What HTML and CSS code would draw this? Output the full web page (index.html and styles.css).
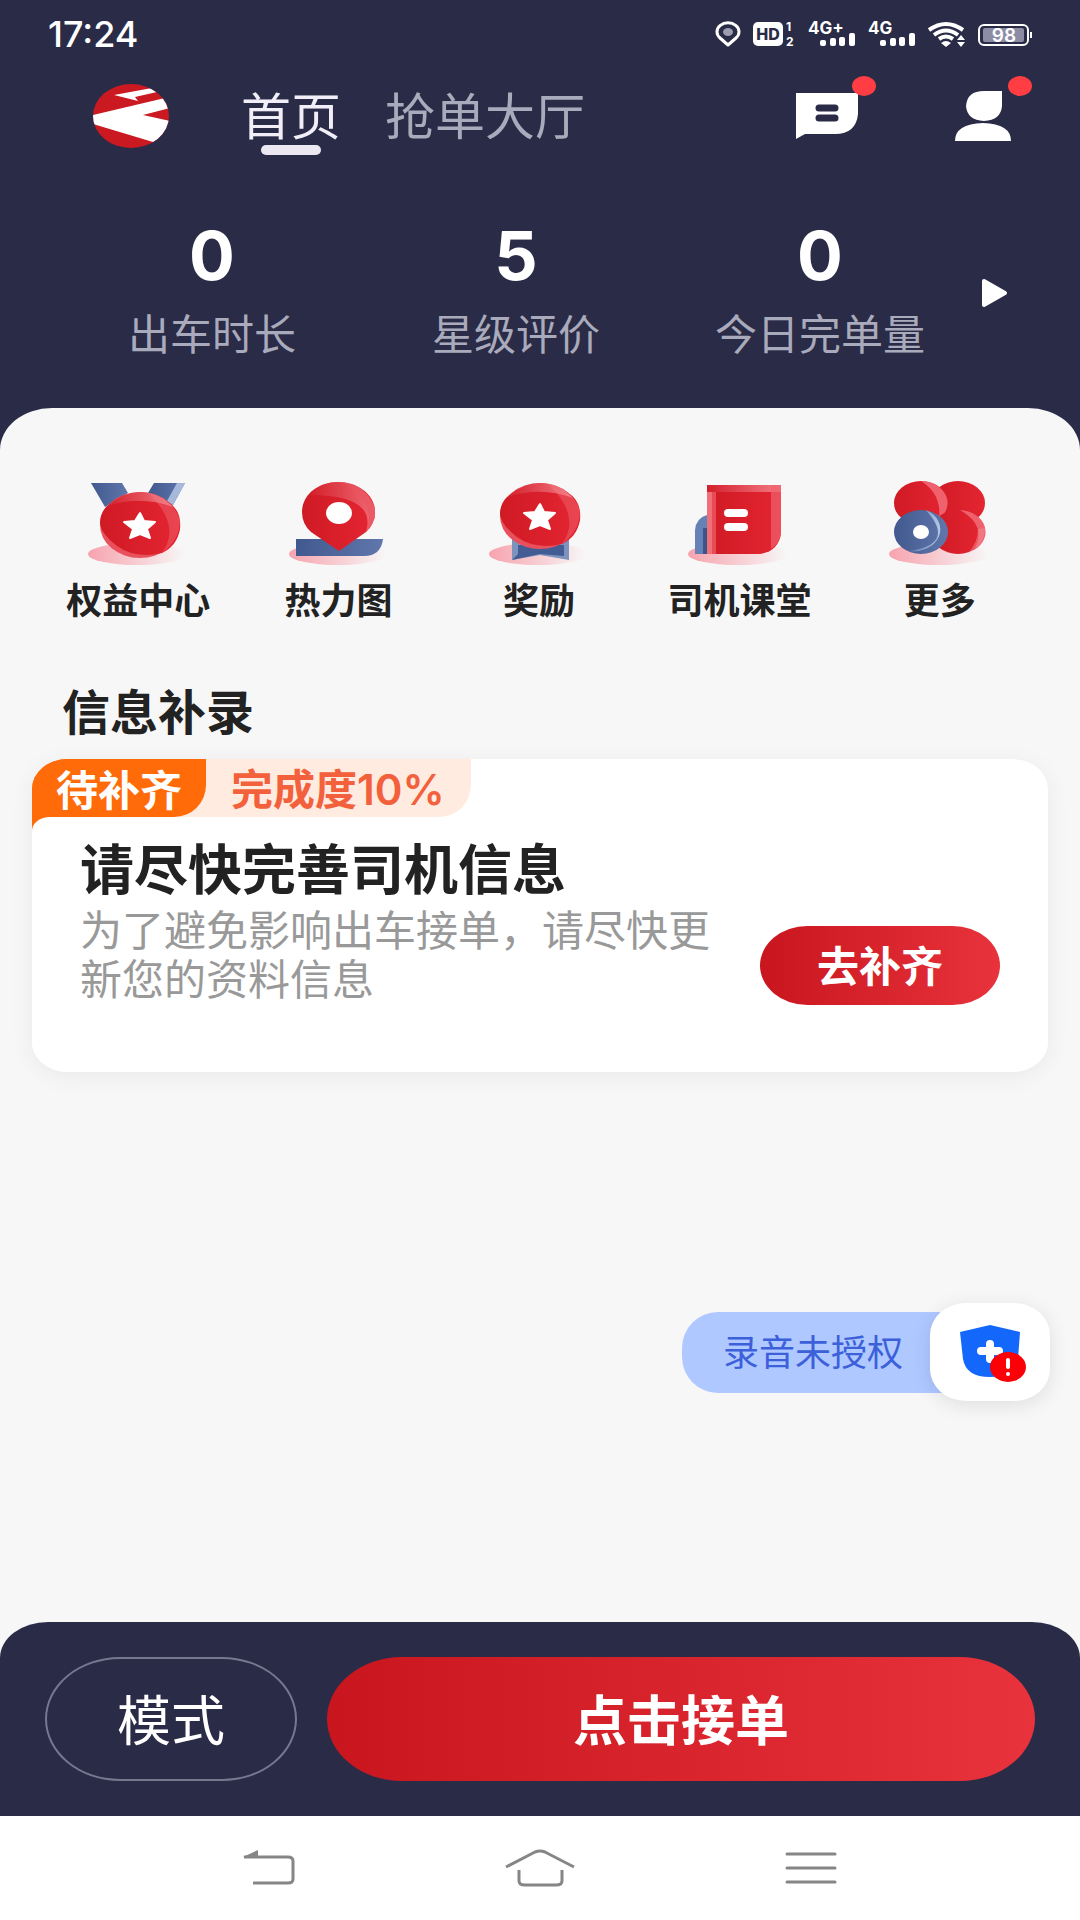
FILE: index.html
```html
<!DOCTYPE html>
<html lang="zh-CN">
  <head>
    <meta charset="UTF-8" />
    <meta name="viewport" content="width=device-width, initial-scale=1.0" />
    <title>首页</title>
    <link rel="stylesheet" href="styles.css">
  </head>
  <body>
    <!-- shared gradients -->
    <svg class="defs" width="0" height="0" aria-hidden="true">
      <defs>
        <linearGradient id="shadow"><stop offset="0" stop-color="#f7a3ae" /><stop offset="1" stop-color="#f7a3ae" stop-opacity="0" /></linearGradient>
        <linearGradient id="red"><stop offset="0" stop-color="#cf1a24" /><stop offset="1" stop-color="#e42532" /></linearGradient>
        <linearGradient id="pink" x1="0" y1="0" x2="1" y2="0"><stop offset="0" stop-color="#d3202b" /><stop offset="1" stop-color="#f37a84" /></linearGradient>
        <linearGradient id="blue"><stop offset="0" stop-color="#42598f" /><stop offset="1" stop-color="#5f77ab" /></linearGradient>
        <linearGradient id="sky"><stop offset="0" stop-color="#5a72a8" /><stop offset="1" stop-color="#b4c8ea" /></linearGradient>
      </defs>
    </svg>

    <header class="header">
      <div class="status">
        <span class="time">17:24</span>
        <div class="status-icons">
          <svg width="26" height="26" viewBox="0 0 26 26"><path d="M13 24 5 17A11 9 0 1 1 21 17Z" fill="none" stroke="#fff" stroke-width="3" stroke-linejoin="round" /><ellipse cx="13" cy="11" rx="5" ry="4" fill="#9c9db0" /></svg>
          <svg width="43" height="26" viewBox="0 0 43 26"><rect y="1" width="30" height="24" rx="5" fill="#fff" /><text class="hd" x="15" y="19" text-anchor="middle">HD</text><text class="sim" x="33" y="10">1</text><text class="sim" x="33" y="25">2</text></svg>
          <svg width="48" height="26" viewBox="0 0 48 26"><text class="net" x="0" y="13">4G+</text><g fill="#fff"><rect x="12" y="19" width="6" height="6" rx="2" /><rect x="22" y="17" width="6" height="8" rx="2" /><rect x="31" y="16" width="6" height="9" rx="2" /><rect x="41" y="12" width="6" height="13" rx="2" /></g></svg>
          <svg width="48" height="26" viewBox="0 0 48 26"><text class="net" x="0" y="13">4G</text><g fill="#fff"><rect x="12" y="19" width="6" height="6" rx="2" /><rect x="22" y="17" width="6" height="8" rx="2" /><rect x="31" y="16" width="6" height="9" rx="2" /><rect x="41" y="12" width="6" height="13" rx="2" /></g></svg>
          <svg width="38" height="26" viewBox="0 0 38 26"><g fill="none" stroke="#fff" stroke-width="4"><path d="M1 9Q18-3 35 9" /><path d="M6 14Q18 5 30 14" /><path d="M11 18Q18 13 25 18" /></g><path d="M13 22Q18 18 23 22L18 26ZM29 19l4-5 4 5ZM29 21h8l-4 5Z" fill="#fff" /></svg>
          <svg width="54" height="26" viewBox="0 0 54 26"><rect x="1" y="4" width="49" height="20" rx="5" fill="none" stroke="#fff" stroke-width="2" /><rect x="5" y="7" width="41" height="14" rx="2" fill="#8c8da5" /><path d="M53 11v6" stroke="#fff" stroke-width="2" /><text class="power" x="26" y="21" text-anchor="middle">98</text></svg>
        </div>
      </div>

      <nav class="topbar">
        <svg class="logo" width="77" height="64" viewBox="0 0 77 64">
          <clipPath id="disc"><ellipse cx="38" cy="32" rx="38" ry="32" /></clipPath>
          <g clip-path="url(#disc)">
            <path d="M0 0h77v64H0Z" fill="#cb1922" />
            <path d="M0 31 72 14 77 24 50 31 77 37V50L60 58 0 40ZM21 11 59 4 64 8 42 13 45 17Z" fill="#fff" />
          </g>
        </svg>
        <a class="tab active" href="#">首页</a>
        <a class="tab" href="#">抢单大厅</a>
        <div class="actions">
          <button class="icon-btn" aria-label="消息">
            <svg width="62" height="46" viewBox="0 0 62 46"><path d="M0 0H62V21Q60 41 39 41H9L0 46Z" fill="#fff" /><path d="M23 15H39M23 25H39" stroke="#2a2b47" stroke-width="7" stroke-linecap="round" /></svg>
            <i class="dot"></i>
          </button>
          <button class="icon-btn user" aria-label="我的">
            <svg width="56" height="50" viewBox="0 0 56 50"><path d="M47 0V15Q46 29 29 30 12 29 11 15 12 0 29 0ZM0 50Q0 33 28 32 56 33 56 50Z" fill="#fff" /></svg>
            <i class="dot"></i>
          </button>
        </div>
      </nav>

      <div class="stats">
        <div class="stat"><strong>0</strong><span>出车时长</span></div>
        <div class="stat"><strong>5</strong><span>星级评价</span></div>
        <div class="stat"><strong>0</strong><span>今日完单量</span></div>
        <button class="next" aria-label="下一页">
          <svg width="25" height="28" viewBox="0 0 25 28"><path d="M2 2 23 14 2 26Z" fill="#fff" stroke="#fff" stroke-width="4" stroke-linejoin="round" /></svg>
        </button>
      </div>
    </header>

    <main class="sheet">
      <nav class="services">
        <a class="service" href="#">
          <svg width="110" height="86" viewBox="0 0 110 86">
            <ellipse cx="54" cy="74" rx="49" ry="11" fill="url(#shadow)" />
            <path d="M8 3H39L45 13 22 27Z" fill="url(#blue)" />
            <path d="M71 3H102L90 25 65 13Z" fill="url(#blue)" />
            <path d="M94 3H102L90 25 84 21Z" fill="#a6b9da" />
            <ellipse cx="57" cy="45" rx="40" ry="33" fill="#e8505c" />
            <path d="M24 26Q55 12 84 21 99 30 97 49 94 66 79 73 52 79 34 66 18 54 17 43 17 33 24 26Z" fill="url(#red)" />
            <path d="M24 26Q40 12 57 12 76 12 90 27 58 15 24 26Z" fill="url(#pink)" />
            <path d="M65 13Q88 17 97 39 97 60 79 73 99 45 65 13Z" fill="#f3808a" opacity=".35" />
            <path d="M57 33 61 41 72 42 64 49 67 58 57 54 47 58 50 49 41 42 52 41Z" fill="#fff" stroke="#fff" stroke-width="2" stroke-linejoin="round" />
          </svg>
          <span>权益中心</span>
        </a>
        <a class="service" href="#">
          <svg width="110" height="86" viewBox="0 0 110 86">
            <ellipse cx="54" cy="74" rx="49" ry="11" fill="url(#shadow)" />
            <path d="M12 59H99Q97 76 80 76H12Z" fill="url(#blue)" />
            <path d="M55 71 27 52Q18 44 18 32C18 14 35 2 54 2S91 14 91 32Q91 44 82 52Z" fill="url(#red)" />
            <path d="M25 15Q37 2 54 2 82 3 91 29 91 43 82 52 93 15 25 15Z" fill="url(#pink)" opacity=".8" />
            <path d="M58 2Q83 5 91 28V38L82 52Q94 22 58 2Z" fill="#e8545f" opacity=".6" />
            <ellipse cx="55" cy="33" rx="13" ry="11" fill="#fff" />
          </svg>
          <span>热力图</span>
        </a>
        <a class="service" href="#">
          <svg width="110" height="86" viewBox="0 0 110 86">
            <ellipse cx="54" cy="74" rx="49" ry="11" fill="url(#shadow)" />
            <path d="M28 58H85V80L56 75 28 80Z" fill="#7d92bd" />
            <path d="M34 65H80V76L56 74 28 80 34 74Z" fill="#435c94" />
            <ellipse cx="56" cy="36" rx="40" ry="33" fill="#e8505c" />
            <path d="M23 17Q54 3 83 12 98 21 96 40 93 57 78 64 51 70 33 57 17 45 16 34 16 24 23 17Z" fill="url(#red)" />
            <path d="M23 17Q39 3 56 3 75 3 89 18 57 6 23 17Z" fill="url(#pink)" />
            <path d="M64 4Q87 8 96 30 96 51 78 64 98 36 64 4Z" fill="#f3808a" opacity=".35" />
            <path d="M56 24 60 32 71 33 63 40 66 49 56 45 46 49 49 40 40 33 51 32Z" fill="#fff" stroke="#fff" stroke-width="2" stroke-linejoin="round" />
          </svg>
          <span>奖励</span>
        </a>
        <a class="service" href="#">
          <svg width="110" height="86" viewBox="0 0 110 86">
            <ellipse cx="54" cy="74" rx="50" ry="11" fill="url(#shadow)" />
            <path d="M23 35V74H11V50Q12 38 23 35Z" fill="#6681b5" />
            <path d="M19 48h4v26h-4Z" fill="#3c5589" />
            <path d="M23 5H97V54Q94 72 75 74H23Z" fill="url(#red)" />
            <path d="M23 5H97V12H23Z" fill="url(#pink)" />
            <path d="M87 5H97V54Q95 64 87 69Z" fill="#ef626d" opacity=".7" />
            <path d="M23 12H32V74H23Z" fill="#f06f79" />
            <path d="M28 12H32V74H28Z" fill="#e84a56" />
            <path d="M44 33H60M44 47H60" stroke="#fff" stroke-width="8" stroke-linecap="round" />
          </svg>
          <span>司机课堂</span>
        </a>
        <a class="service" href="#">
          <svg width="110" height="86" viewBox="0 0 110 86">
            <ellipse cx="54" cy="74" rx="50" ry="11" fill="url(#shadow)" />
            <ellipse cx="73" cy="23" rx="27" ry="22" fill="url(#red)" />
            <ellipse cx="36" cy="23" rx="27" ry="22" fill="url(#red)" />
            <path d="M36 1A27 22 0 0 1 54 39Q57 14 36 1Z" fill="#ef626d" />
            <ellipse cx="73" cy="52" rx="27" ry="22" fill="url(#red)" />
            <path d="M75 30A27 22 0 0 1 89 70Q103 46 75 30Z" fill="#ef626d" />
            <path d="M100 48Q100 66 84 72 93 62 93 49Z" fill="#f48b94" opacity=".5" />
            <ellipse cx="36" cy="52" rx="27" ry="22" fill="url(#blue)" />
            <path d="M41 30A27 22 0 0 1 23 71Q72 65 41 30Z" fill="url(#sky)" />
            <ellipse cx="36" cy="52" rx="8" ry="7" fill="#fff" />
          </svg>
          <span>更多</span>
        </a>
      </nav>

      <h2 class="section-title">信息补录</h2>
      <section class="card">
        <div class="tags">
          <span class="tag">待补齐</span>
          <span class="progress">完成度10%</span>
        </div>
        <div class="card-body">
          <h3>请尽快完善司机信息</h3>
          <div class="card-row">
            <p>为了避免影响出车接单，请尽快更新您的资料信息</p>
            <button class="fill-btn">去补齐</button>
          </div>
        </div>
      </section>

      <button class="record">
        <span class="record-text">录音未授权</span>
        <span class="record-icon">
          <svg width="66" height="58" viewBox="0 0 66 58">
            <path d="M0 7 30 0 60 7 58 34Q55 52 30 52 6 52 3 34Z" fill="#1467fb" />
            <path d="M30 19V34M21 26H39" stroke="#fff" stroke-width="8" stroke-linecap="round" />
            <ellipse cx="48" cy="42" rx="18" ry="15" fill="#fb0007" />
            <path d="M48 35V42" stroke="#fff" stroke-width="4" stroke-linecap="round" />
            <circle cx="48" cy="49" r="2" fill="#fff" />
          </svg>
        </span>
      </button>
    </main>

    <footer class="bottom">
      <button class="mode-btn">模式</button>
      <button class="start-btn">点击接单</button>
    </footer>

    <nav class="system">
      <button class="sys-btn" aria-label="返回"><svg width="70" height="40" viewBox="0 0 70 40"><path d="M19 35H54Q59 35 59 31V13Q59 9 54 9H10" fill="none" stroke="#868686" stroke-width="3" /><path d="M9 9 24 2V9Z" fill="#868686" /></svg></button>
      <button class="sys-btn" aria-label="主页"><svg width="70" height="40" viewBox="0 0 70 40"><path d="M1 19 30 4Q35 2 40 4L69 19M14 22V33Q14 37 20 37H51Q57 37 57 33V22" fill="none" stroke="#868686" stroke-width="3" /></svg></button>
      <button class="sys-btn" aria-label="菜单"><svg width="70" height="40" viewBox="0 0 70 40"><path d="M11 6H59M11 20H59M11 34H59" stroke="#868686" stroke-width="3" stroke-linecap="round" /></svg></button>
    </nav>
  </body>
</html>
```
FILE: styles.css
```css
* {
    margin: 0;
    padding: 0;
    box-sizing: border-box;
}
body {
    position: relative;
    min-height: 100vh;
    display: flex;
    flex-direction: column;
    background: #f7f7f7;
    color: #222;
    font-family: "Noto Sans CJK SC", sans-serif;
}
a {
    color: inherit;
    text-decoration: none;
}
button {
    border: none;
    background: none;
    font-family: inherit;
    cursor: pointer;
}
svg {
    display: block;
    overflow: visible;
}
.defs {
    position: absolute;
}

/* header */
.header {
    background: #2a2b47;
    color: #fff;
    padding-bottom: 101px;
    margin-bottom: -52px;
}
.status {
    height: 68px;
    padding: 0 48px;
    display: flex;
    align-items: center;
    justify-content: space-between;
}
.time {
    font: 500 36px/40px Inter, sans-serif;
}
.status-icons {
    display: flex;
    gap: 12px;
}
.status text {
    font-family: Inter, sans-serif;
    font-weight: 700;
    fill: #fff;
}
.status .hd {
    font-size: 16px;
    font-weight: 800;
    fill: #2a2b47;
}
.status .sim {
    font-size: 12px;
}
.status .net {
    font-size: 17px;
}
.status .power {
    font-size: 19px;
    font-weight: 600;
}
.topbar {
    height: 96px;
    padding: 0 69px 0 93px;
    display: flex;
    align-items: center;
}
.logo {
    margin-right: 71px;
}
.tab {
    position: relative;
    margin-right: 44px;
    padding-bottom: 6px;
    font-size: 50px;
    line-height: 60px;
    color: #a9aabb;
}
.tab.active {
    color: #f1eef8;
}
.tab.active::after {
    content: "";
    position: absolute;
    left: 50%;
    bottom: -6px;
    width: 60px;
    height: 10px;
    margin-left: -30px;
    border-radius: 6px;
    background: #ebe8f2;
}
.actions {
    margin-left: auto;
    display: flex;
    align-items: center;
    gap: 97px;
}
.icon-btn {
    position: relative;
}
.dot {
    position: absolute;
    top: -17px;
    right: -18px;
    width: 24px;
    height: 20px;
    border-radius: 50%;
    background: #ff3d42;
}
.user .dot {
    top: -15px;
    right: -21px;
}
.stats {
    margin-top: 51px;
    padding: 0 73px 0 60px;
    display: flex;
}
.stat {
    flex: 1;
    text-align: center;
}
.stat strong {
    display: block;
    font: 700 68px/80px Inter, sans-serif;
}
.stat span {
    display: block;
    margin-top: 12px;
    padding-bottom: 2px;
    font-size: 42px;
    line-height: 50px;
    color: #a9aabb;
}
.next {
    align-self: flex-end;
    height: 132px;
    margin-left: 10px;
}

/* content */
.sheet {
    position: relative;
    flex: 1;
    padding: 72px 32px 0;
    border-radius: 52px 52px 0 0 / 42px 42px 0 0;
    background: #f7f7f7;
}
.services {
    display: flex;
    padding: 0 8px 0 6px;
}
.service {
    flex: 1;
    display: flex;
    flex-direction: column;
    align-items: center;
    gap: 10px;
    font-size: 36px;
    font-weight: 700;
    line-height: 44px;
}
.section-title {
    margin: 59px 0 20px 30px;
    font-size: 48px;
    font-weight: 700;
    line-height: 60px;
}
.card {
    min-height: 313px;
    border-radius: 36px / 30px;
    background: linear-gradient(#ff6b08, #ff6b08) 0 0 / 40px 80px no-repeat #fff;
    box-shadow: 0 4px 24px rgba(0, 0, 0, 0.06);
}
.tags {
    display: flex;
    font-size: 42px;
    font-weight: 700;
    line-height: 58px;
}
.tag {
    position: relative;
    padding: 0 24px;
    border-radius: 36px 0 32px 0 / 30px 0 32px 0;
    background: #ff6b08;
    color: #fff;
}
.progress {
    margin-left: -32px;
    padding: 3px 26px 0 57px;
    border-radius: 0 0 32px 0;
    background: #ffebdf;
    color: #f2603c;
    font-family: Inter, "Noto Sans CJK SC", sans-serif;
    font-weight: 600;
    line-height: 55px;
}
.card-body {
    min-height: 255px;
    padding: 18px 48px 0;
    border-radius: 18px 0 36px 36px / 14px 0 30px 30px;
    background: #fff;
}
.card h3 {
    font-size: 54px;
    font-weight: 700;
    line-height: 64px;
}
.card-row {
    display: flex;
    align-items: flex-start;
    justify-content: space-between;
    margin-top: 4px;
}
.card p {
    width: 640px;
    font-size: 42px;
    line-height: 49px;
    color: #999;
}
.fill-btn {
    width: 240px;
    height: 79px;
    margin-top: 23px;
    padding-bottom: 4px;
    border-radius: 48px / 40px;
    background: linear-gradient(90deg, #c9161e, #e8323c);
    color: #fff;
    font-size: 42px;
    font-weight: 700;
}

/* floating recorder hint */
.record {
    position: absolute;
    right: 30px;
    bottom: 221px;
    display: flex;
    align-items: center;
}
.record-text {
    padding: 0 63px 4px 41px;
    margin-right: -36px;
    border-radius: 36px 0 0 36px;
    background: #afc8ff;
    color: #3c5fda;
    font-size: 36px;
    line-height: 77px;
}
.record-icon {
    width: 120px;
    height: 98px;
    padding: 22px 0 0 30px;
    border-radius: 36px / 32px;
    background: #fff;
    box-shadow: 0 4px 20px rgba(0, 0, 0, 0.1);
}

/* bottom bar */
.bottom {
    display: flex;
    gap: 30px;
    padding: 35px 45px;
    border-radius: 48px 48px 0 0 / 36px 36px 0 0;
    background: #2a2b47;
}
.bottom button {
    height: 124px;
    padding-bottom: 4px;
    border-radius: 75px / 62px;
    color: #fff;
    font-size: 54px;
}
.bottom .mode-btn {
    width: 252px;
    border: 2px solid #77788f;
}
.bottom .start-btn {
    flex: 1;
    background: linear-gradient(90deg, #c9161e, #e8323c);
    font-weight: 700;
}
.system {
    height: 104px;
    padding: 0 234px;
    display: flex;
    align-items: center;
    justify-content: space-between;
    background: #fff;
}
```
